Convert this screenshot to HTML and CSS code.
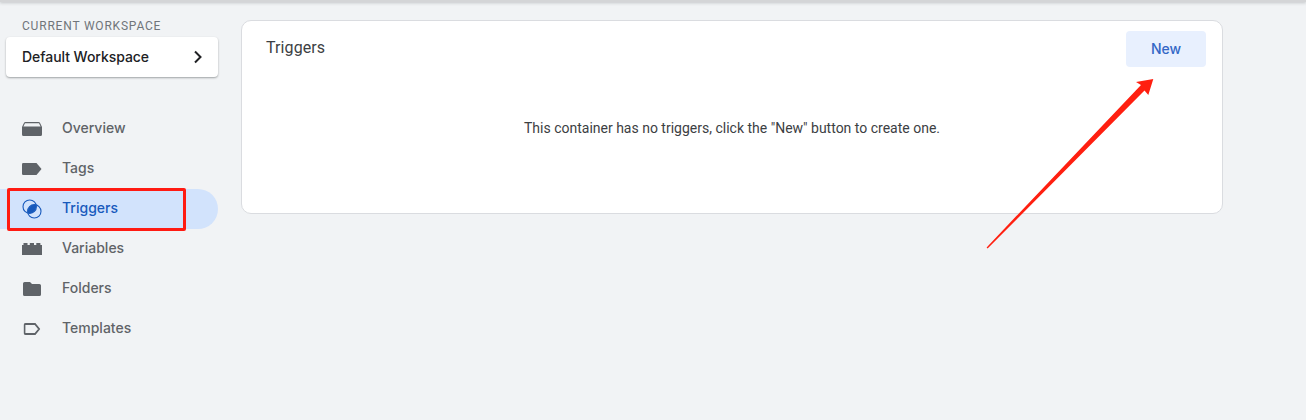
FILE: index.html
```html
<!DOCTYPE html>
<html lang="en">
<head>
  <meta charset="UTF-8" />
  <title>Triggers</title>
  <link rel="stylesheet" href="styles.css">
</head>
<body>
  <div class="top-shadow"></div>

  <div class="container">
    <aside class="sidebar">
      <div class="workspace-label">CURRENT WORKSPACE</div>
      <div class="workspace-card">
        <span>Default Workspace</span>
        <svg class="chevron" width="10" height="14" viewBox="0 0 10 14"><path d="M2 1.5 7.5 7 2 12.5" fill="none" stroke="#202124" stroke-width="2"/></svg>
      </div>

      <nav class="nav">
        <div class="nav-item">
          <svg class="nav-icon" width="20" height="14" viewBox="0 0 20 14"><path d="M0 5 1.8 1.2Q2.3 0 3.6 0H16.4Q17.7 0 18.2 1.2L20 5V12.5Q20 14 18.5 14H1.5Q0 14 0 12.5ZM1.4 4.6H18.6L17 1.2H3Z" fill="#5f6368" fill-rule="evenodd"/></svg>
          <span>Overview</span>
        </div>
        <div class="nav-item">
          <svg class="nav-icon" width="20" height="12" viewBox="0 0 20 12"><path d="M0 1.2Q0 0 1.2 0H14.5L19.5 6 14.5 12H1.2Q0 12 0 10.8Z" fill="#5f6368"/></svg>
          <span>Tags</span>
        </div>
        <div class="nav-item active">
          <svg class="nav-icon" width="20" height="20" viewBox="0 0 20 20">
            <circle cx="7.7" cy="7.7" r="6.7" fill="none" stroke="#185abc" stroke-width="1.1"/>
            <circle cx="12.3" cy="12.3" r="6.7" fill="none" stroke="#185abc" stroke-width="1.1"/>
            <path d="M13.9 5.8A6.7 6.7 0 0 1 6.1 14.2 6.7 6.7 0 0 1 13.9 5.8Z" fill="#185abc"/>
          </svg>
          <span>Triggers</span>
        </div>
        <div class="nav-item">
          <svg class="nav-icon" width="20" height="12" viewBox="0 0 20 12"><path d="M0 2H1.5V0H5.5V2H7.8V0H12V2H14.3V0H18.4V2H20V12H0Z" fill="#5f6368"/></svg>
          <span>Variables</span>
        </div>
        <div class="nav-item">
          <svg class="nav-icon" width="18" height="14" viewBox="0 0 18 14"><path d="M1.6 0H7L9 2H16.4Q18 2 18 3.6V12.4Q18 14 16.4 14H1.6Q0 14 0 12.4V1.6Q0 0 1.6 0Z" fill="#5f6368"/></svg>
          <span>Folders</span>
        </div>
        <div class="nav-item">
          <svg class="nav-icon" width="17" height="12" viewBox="0 0 17 12"><path d="M1 2Q1 1 2 1H11.5L15.6 6 11.5 11H2Q1 11 1 10Z" fill="none" stroke="#5f6368" stroke-width="1.8"/></svg>
          <span>Templates</span>
        </div>
      </nav>
    </aside>

    <main class="card">
      <div class="card-head">
        <h2 class="card-title">Triggers</h2>
        <button class="new-btn">New</button>
      </div>
      <p class="empty-msg">This container has no triggers, click the "New" button to create one.</p>
    </main>
  </div>

  <!-- annotations drawn over the screenshot -->
  <div class="red-box"></div>
  <svg class="arrow" width="1306" height="420" viewBox="0 0 1306 420"><polygon points="986.6,247.4 1141,85 1136,82 1153.3,79 1148.3,95 1144.5,90.5 987.6,248.6" fill="#ff1f10"/></svg>
</body>
</html>
```

FILE: styles.css
```css
* {
  margin: 0;
  padding: 0;
  box-sizing: border-box;
}

html, body {
  height: 420px;
  overflow: hidden;
}

body {
  position: relative;
  font-family: 'Roboto', 'Liberation Sans', sans-serif;
  background-color: #f1f3f5;
  color: #3c4043;
}

.top-shadow {
  height: 2px;
  background: #d4d5d7;
  box-shadow: 0 1px 3px rgba(60,64,67,0.3);
}

.container {
  display: flex;
  align-items: flex-start;
}

.sidebar {
  width: 218px;
  flex: none;
}

.workspace-label {
  padding: 16px 0 0 22px;
  height: 35px;
  font-size: 12px;
  line-height: 16px;
  letter-spacing: 0.8px;
  color: #70757a;
}

.workspace-card {
  display: flex;
  align-items: center;
  justify-content: space-between;
  height: 40px;
  margin-left: 6px;
  padding: 0 15px 0 16px;
  background-color: #fff;
  border-radius: 4px;
  box-shadow: 0 1px 2px rgba(60,64,67,0.45);
  font-family: 'Inter', 'Roboto', sans-serif;
  font-size: 14px;
  font-weight: 500;
  letter-spacing: -0.05px;
  color: #202124;
}

.workspace-card span {
  margin-top: -2px;
}

.nav {
  margin-top: 32px;
}

.nav-item {
  display: flex;
  align-items: center;
  height: 40px;
  font-family: 'Inter', 'Roboto', sans-serif;
  font-size: 14px;
  font-weight: 500;
  color: #5f6368;
  position: relative;
}

.nav-item.active {
  background-color: #d2e3fc;
  border-radius: 0 20px 20px 0;
  color: #185abc;
}

.nav-icon {
  position: absolute;
  left: 32px;
  transform: translateX(-50%);
}

.nav-item span {
  margin: -4px 0 0 62px;
}

.card {
  width: 982px;
  height: 194px;
  margin: 18px 0 0 23px;
  background-color: #fff;
  border: 1px solid #dadce0;
  border-radius: 10px;
}

.card-head {
  display: flex;
  justify-content: space-between;
  padding: 10px 16px 0 24px;
}

.card-title {
  padding-top: 1px;
  font-size: 16px;
  font-weight: 400;
  line-height: 32px;
  letter-spacing: 0.1px;
  color: #3c4043;
}

.new-btn {
  width: 80px;
  height: 36px;
  padding-bottom: 2px;
  border: none;
  border-radius: 4px;
  background-color: #e8f0fe;
  color: #3367c6;
  font-family: 'Inter', 'Roboto', sans-serif;
  font-size: 14px;
  font-weight: 500;
}

.empty-msg {
  margin-top: 51px;
  text-align: center;
  font-size: 14px;
  line-height: 20px;
  color: #3c4043;
}

.red-box {
  position: absolute;
  left: 7px;
  top: 188px;
  width: 179px;
  height: 43px;
  border: 3px solid #ff1a12;
  border-radius: 2px;
}

.arrow {
  position: absolute;
  left: 0;
  top: 0;
}
```
